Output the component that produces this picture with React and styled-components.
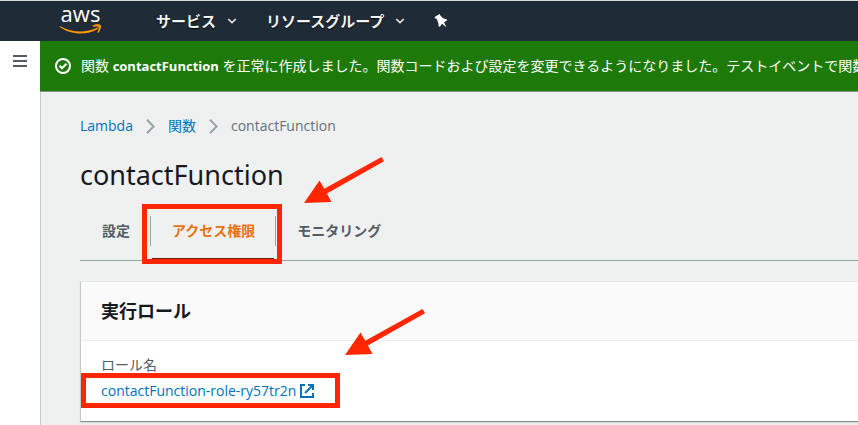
import React from "react";
import styled, { createGlobalStyle } from "styled-components";

const GlobalStyle = createGlobalStyle`
  *, *::before, *::after { box-sizing: border-box; }
  body {
    margin: 0;
    background: #eff1f1;
    color: #16191f;
    font: 14px/22px "Open Sans", "Noto Sans CJK JP", sans-serif;
    overflow-x: hidden;
  }
  a { color: #0073bb; text-decoration: none; }
  a:hover { text-decoration: underline; }
  button { font: inherit; border: 0; background: none; padding: 0; cursor: pointer; }
`;

const Page = styled.div`
  min-height: 100vh;
  display: flex;
  flex-direction: column;
`;

const TopBar = styled.header`
  display: flex;
  align-items: center;
  height: 41px;
  padding-left: 59px;
  border-top: 1px solid #d5dbdb;
  background: #202b38;
`;

const Logo = styled.a`
  display: flex;
  flex-direction: column;
  align-items: center;
  width: 43px;
  margin-right: 54px;
  padding-bottom: 6px;
  font: 400 22px/22px "Open Sans", sans-serif;
  && { color: #fff; text-decoration: none; }
  svg { display: block; }
`;

const NavButton = styled.button`
  display: flex;
  align-items: center;
  gap: 11px;
  margin-right: 29px;
  && { color: #f2f3f3; font-weight: 700; font-size: 15px; }
  text-shadow: 0 1px 1px #000;
`;

const PinButton = styled.button`
  display: flex;
`;

const Body = styled.div`
  display: flex;
  flex: 1;
`;

const Rail = styled.aside`
  flex: none;
  display: flex;
  justify-content: center;
  align-items: flex-start;
  width: 40px;
  padding-top: 14px;
  background: #fff;
  svg { display: block; }
`;

const Main = styled.main`
  flex: 1;
  min-width: 0;
  border-left: 1px solid #c3c9c9;
`;

const Flash = styled.div`
  display: flex;
  align-items: center;
  gap: 10px;
  height: 51px;
  margin-left: -1px;
  padding-left: 15px;
  overflow: hidden;
  white-space: nowrap;
  background: #1d7a08;
  border-bottom: 1px solid #87918b;
  color: #fff;
  svg { flex: none; }
  b { font-size: 13px; }
`;

const Content = styled.div`
  padding: 23px 0 0 39px;
`;

const Crumbs = styled.nav`
  display: flex;
  align-items: center;
  gap: 13px;
  color: #687078;
`;

const Title = styled.h1`
  margin: 20px 0 23px;
  font-family: "Noto Sans", sans-serif;
  font-size: 27px;
  line-height: 36px;
  font-weight: 400;
`;

const Tabs = styled.div`
  display: flex;
  padding-bottom: 14px;
  border-bottom: 1px solid #95a5a6;
`;

const TabSlot = styled.div`
  position: relative;
  border-left: 1px solid ${(p) => (p.$first ? "transparent" : "#95a5a6")};
`;

const Tab = styled.button`
  display: block;
  height: 30px;
  && {
    padding: 0 20px 0 21px;
    font-weight: 700;
    color: ${(p) => (p.$active ? "#ec7211" : "#545b64")};
  }
`;

const Highlight = styled.span`
  position: absolute;
  inset: ${(p) => p.$inset};
  border: 5px solid #ff2600;
  pointer-events: none;
`;

const ActiveLine = styled.span`
  position: absolute;
  left: 1px;
  right: 1px;
  bottom: -13px;
  height: 1px;
  background: #6b1a10;
`;

const Pointer = styled.svg`
  position: absolute;
  left: ${(p) => p.$left};
  bottom: ${(p) => p.$bottom};
  pointer-events: none;
`;

const Panel = styled.section`
  margin-top: 20px;
  background: #fff;
  border: 1px solid #e3e7e7;
  border-left-color: #c3c9c9;
  border-bottom-color: #87918b;
  border-right: 0;
  box-shadow: 0 1px 1px #d5dbdb;
`;

const PanelHead = styled.header`
  padding: 18px 20px;
  background: #fafafa;
  border-bottom: 1px solid #eaeded;
  h2 { margin: 0; font-size: 18px; line-height: 22px; }
`;

const Fields = styled.dl`
  margin: 0;
  padding: 13px 20px 19px;
`;

const FieldName = styled.dt`
  line-height: 22px;
  color: #545b64;
`;

const FieldValue = styled.dd`
  margin: 4px 0 0;
`;

const RoleLink = styled.a`
  position: relative;
  display: inline-flex;
  align-items: center;
  gap: 4px;
  font-weight: 500;
`;

const Caret = () => (
  <svg width="10" height="6" viewBox="0 0 10 6" aria-hidden="true">
    <path d="M1.2 1 5 4.6 8.8 1" fill="none" stroke="#e6e8e9" strokeWidth="1.6" />
  </svg>
);

const Separator = () => (
  <svg width="9" height="15" viewBox="0 0 9 15" aria-hidden="true">
    <path d="M1 .8 7.6 7.5 1 14.2" fill="none" stroke="#95a5a6" strokeWidth="2" />
  </svg>
);

const Arrow = ({ left, bottom }) => (
  <Pointer $left={left} $bottom={bottom} width="81" height="47" viewBox="0 0 81 47" aria-hidden="true">
    <path d="M0 46 15.5 23.5 20.3 31.8 77.5 0 80 4.3 22.9 36.5 27.5 45Z" fill="#ff2600" />
  </Pointer>
);

export default function App() {
  return (
    <Page>
      <GlobalStyle />
      <TopBar>
        <Logo href="#">
          aws
          <svg width="43" height="11" viewBox="0 0 43 11" aria-hidden="true">
            <path d="M1.3 2.2C12.5 8.7 27 9.2 37.7 3.7c1-.5 1.8.6.9 1.3C28 11.7 11 10.8.9 3c-.5-.5-.1-1 .4-.8Z" fill="#ff9900" />
            <path d="M33.8 1.6c2.8-1.8 7.3-1.5 8 0 .7 1.7-.8 5.6-2.7 7.2-.5.4-.9.1-.7-.4.8-2 1.6-4.4 1.1-5.2-.6-.8-3.3-.6-5.2-.5-.7 0-.9-.6-.5-1.1Z" fill="#ff9900" />
          </svg>
        </Logo>
        <NavButton type="button">サービス <Caret /></NavButton>
        <NavButton type="button">リソースグループ <Caret /></NavButton>
        <PinButton type="button" aria-label="Pin">
          <svg width="14" height="14" viewBox="0 0 14 14">
            <path d="M5.6 0 6.5 1.8 9.5 4.5 12.7 5.2 13 6.4 10 8.3 12.5 13.3 8 9.8 5.9 12.7 4.6 12.2 4.3 8.9 2.8 5.1.7 3.9 1 2.7Z" fill="#fff" />
          </svg>
        </PinButton>
      </TopBar>
      <Body>
        <Rail>
          <button type="button" aria-label="Menu">
            <svg width="14" height="12" viewBox="0 0 14 12">
              <path d="M0 1h14M0 6h14M0 11h14" stroke="#545b64" strokeWidth="2" />
            </svg>
          </button>
        </Rail>
        <Main>
          <Flash role="status">
            <svg width="16" height="16" viewBox="0 0 16 16" aria-hidden="true">
              <circle cx="8" cy="8" r="7" fill="none" stroke="#fff" strokeWidth="2" />
              <path d="m4.5 7.8 2.5 2.5 4.5-4.5" fill="none" stroke="#fff" strokeWidth="2" />
            </svg>
            <span>
              関数 <b>contactFunction</b> を正常に作成しました。関数コードおよび設定を変更できるようになりました。テストイベントで関数
            </span>
          </Flash>
          <Content>
            <Crumbs aria-label="breadcrumb">
              <a href="#">Lambda</a>
              <Separator />
              <a href="#">関数</a>
              <Separator />
              <span>contactFunction</span>
            </Crumbs>
            <Title>contactFunction</Title>
            <Tabs role="tablist">
              <TabSlot $first>
                <Tab type="button" role="tab">設定</Tab>
              </TabSlot>
              <TabSlot>
                <Tab type="button" role="tab" aria-selected="true" $active>アクセス権限</Tab>
                <Highlight $inset="-12px -7px -18px -9px" />
                <ActiveLine />
                <Arrow left="153px" bottom="42px" />
              </TabSlot>
              <TabSlot>
                <Tab type="button" role="tab">モニタリング</Tab>
              </TabSlot>
            </Tabs>
            <Panel>
              <PanelHead>
                <h2>実行ロール</h2>
              </PanelHead>
              <Fields>
                <FieldName>ロール名</FieldName>
                <FieldValue>
                  <RoleLink href="#">
                    contactFunction-role-ry57tr2n
                    <svg width="14" height="14" viewBox="0 0 14 14" aria-hidden="true">
                      <path d="M5 1H1v12h12V9M8 1h5v5M13 1 5 9" fill="none" stroke="#0073bb" strokeWidth="2" />
                    </svg>
                    <Highlight $inset="-7px -26px -6px -20px" />
                    <Arrow left="244px" bottom="46px" />
                  </RoleLink>
                </FieldValue>
              </Fields>
            </Panel>
          </Content>
        </Main>
      </Body>
    </Page>
  );
}
